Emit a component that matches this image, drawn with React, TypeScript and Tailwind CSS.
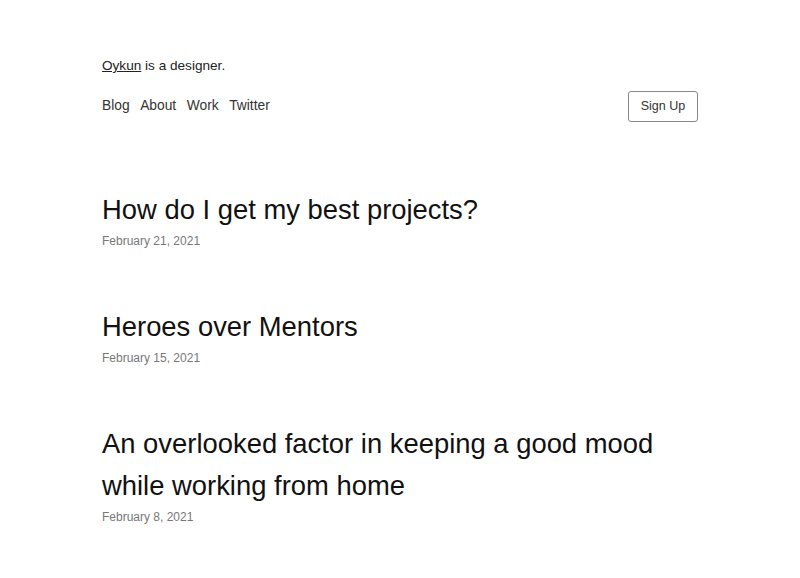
const posts = [
  { title: 'How do I get my best projects?', date: 'February 21, 2021' },
  { title: 'Heroes over Mentors', date: 'February 15, 2021' },
  { title: 'An overlooked factor in keeping a good mood while working from home', date: 'February 8, 2021' },
]

export default function App() {
  return (
    <div className="min-h-screen bg-white font-['Liberation_Sans',Arial,sans-serif] text-[#222]">
      <div className="mx-auto w-[596px] pt-[56px]">
        <p className="text-[13.6px] leading-[20px]">
          <a href="#" className="underline">Oykun</a> is a designer.
        </p>
        <header className="mt-[15px] flex items-center justify-between">
          <nav className="flex gap-[10.5px] text-[13.8px] text-[#333]">
            <a href="#">Blog</a>
            <a href="#">About</a>
            <a href="#">Work</a>
            <a href="#">Twitter</a>
          </nav>
          <button className="h-[31px] w-[70px] rounded-[3px] border border-[#888] text-[12.5px] text-[#333]">Sign Up</button>
        </header>
        <main className="mt-[67px] flex flex-col gap-[56px]">
          {posts.map((p) => (
            <article key={p.title}>
              <h2 className="text-[27.4px] leading-[42px] text-[#111]">{p.title}</h2>
              <p className="mt-[1px] text-[12px] text-[#777]">{p.date}</p>
            </article>
          ))}
        </main>
      </div>
    </div>
  )
}
